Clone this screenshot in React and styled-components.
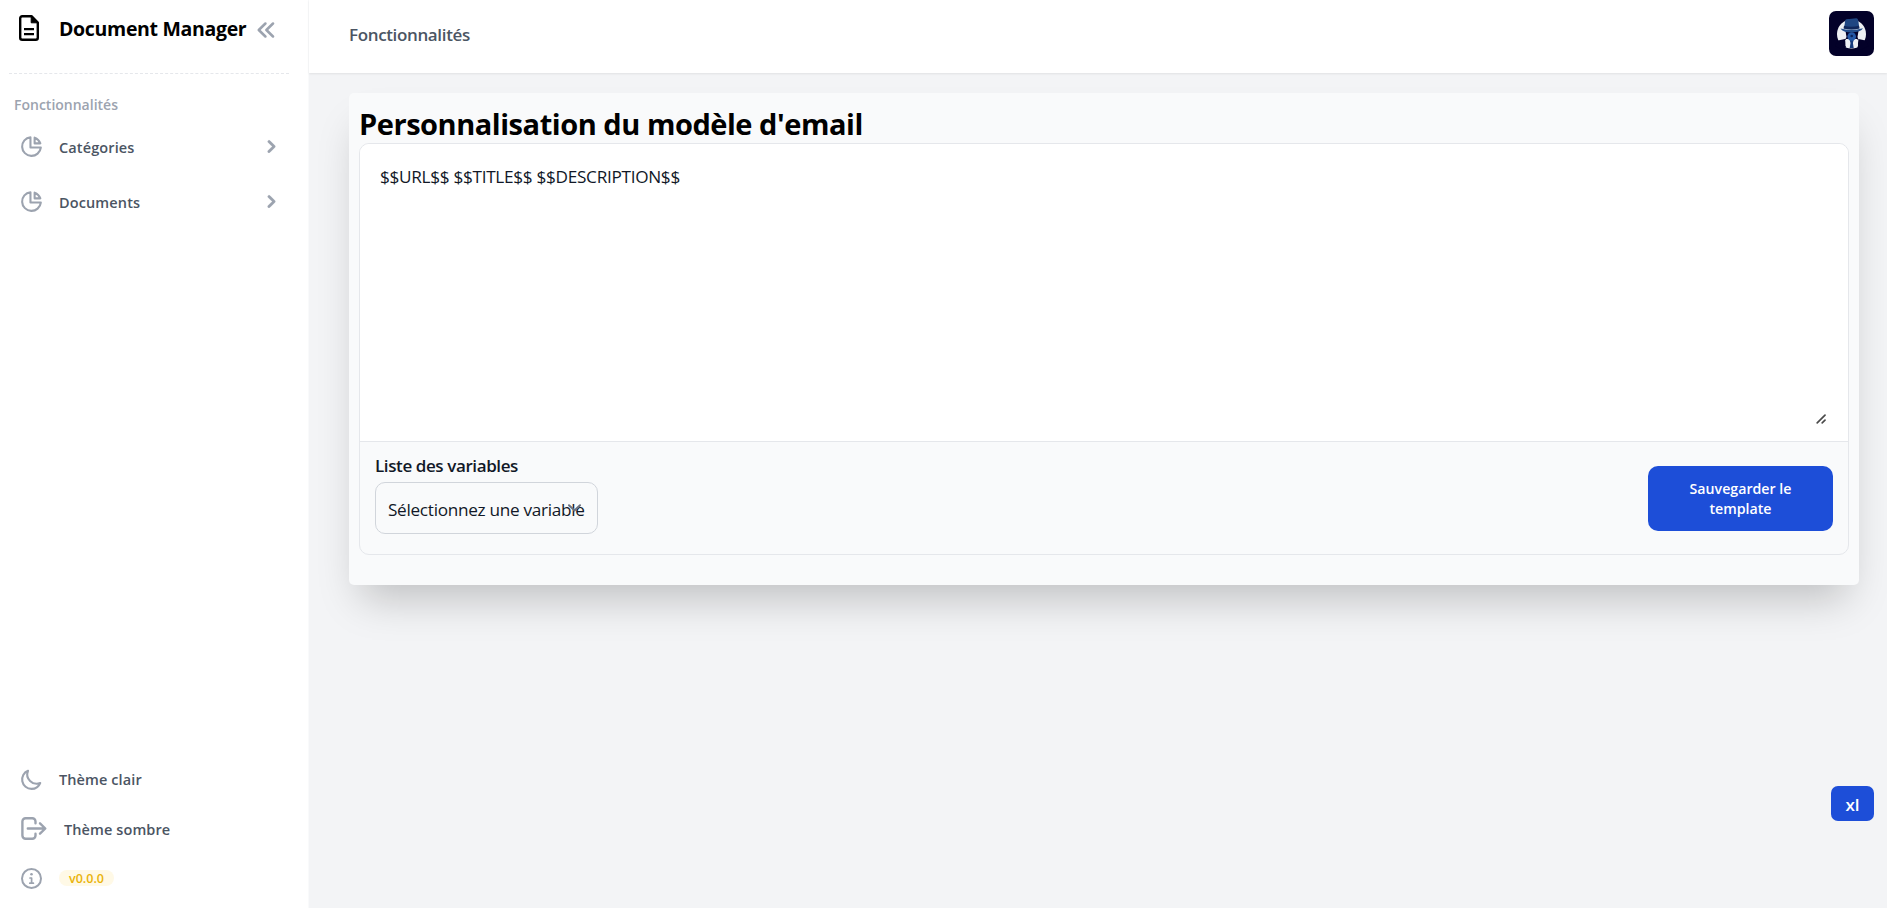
import React from "react";
import styled, { createGlobalStyle } from "styled-components";

const GlobalStyle = createGlobalStyle`
  *, *::before, *::after { box-sizing: border-box; }
  body { margin: 0; background: #f3f4f6; font-family: "Segoe UI", "Open Sans", "Noto Sans", sans-serif; color: #111827; overflow: hidden; }
  h1, p { margin: 0; }
`;

const Label = styled.span`
  display: block;
  white-space: nowrap;
  font-size: ${(p) => p.$size || 14.5}px;
  font-weight: ${(p) => p.$weight || 600};
  line-height: ${(p) => p.$line || 24}px;
  letter-spacing: ${(p) => p.$spacing || 0}px;
  color: ${(p) => p.$color || "#4b5563"};
`;

const Page = styled.div`
  display: grid;
  grid-template-columns: 309px 1fr;
  height: 908px;
`;

const Sidebar = styled.aside`
  display: flex;
  flex-direction: column;
  justify-content: space-between;
  background: #fff;
  border-right: 1px solid #f9fafb;
`;

const Brand = styled.div`
  display: flex;
  align-items: center;
  height: 74px;
  margin: 0 19px 0 9px;
  padding: 0 14px 16px 10px;
  border-bottom: 1px dashed #e5e7eb;
`;

const BrandName = styled(Label)`
  margin-left: 20px;
  flex: 1;
`;

const SectionTitle = styled(Label)`
  margin: 19px 0 0 14px;
`;

const NavItem = styled.a`
  display: flex;
  align-items: center;
  height: 55px;
  padding: 0 24px 0 19px;
`;

const NavList = styled.nav`
  display: flex;
  flex-direction: column;
  padding-top: 2px;
`;

const NavText = styled(Label)`
  flex: 1;
  margin-left: ${(p) => p.$gap || 15}px;
  padding-top: 2px;
`;

const BottomNav = styled.nav`
  display: flex;
  flex-direction: column;
  padding-bottom: 5px;
`;

const BottomItem = styled.a`
  display: flex;
  align-items: center;
  height: 49.5px;
  padding-left: 19px;
`;

const Version = styled.span`
  margin-left: 15px;
  width: 55px;
  height: 16px;
  border-radius: 8px;
  background: #fff9e6;
  color: #eab308;
  font-size: 12.5px;
  font-weight: 600;
  line-height: 17px;
  text-align: center;
`;

const Icon = styled.svg`
  display: block;
  flex: none;
  width: ${(p) => p.$w || 25}px;
  height: ${(p) => p.$h || p.$w || 25}px;
  fill: none;
  stroke: ${(p) => p.$color || "#9ca3af"};
  stroke-width: 2;
  stroke-linecap: round;
  stroke-linejoin: round;
`;

const FileIcon = styled(Icon)`
  margin-bottom: 2px;
`;

const CollapseIcon = styled(Icon)`
  margin-top: 3px;
`;

const Main = styled.main`
  display: flex;
  flex-direction: column;
  min-width: 0;
`;

const Header = styled.header`
  display: flex;
  justify-content: space-between;
  align-items: flex-start;
  height: 73px;
  padding: 11px 13px 0 40px;
  background: #fff;
  box-shadow: 0 1px 2px rgba(0, 0, 0, 0.08);
`;

const Crumb = styled(Label)`
  margin-top: 12px;
`;

const Avatar = styled.svg`
  width: 45px;
  height: 45px;
  border-radius: 7px;
  background: #030129;
`;

const Card = styled.section`
  margin: 20px 28px 0 40px;
  padding: 12px 10px 31px;
  height: 492px;
  border-radius: 5px;
  background: #f9fafb;
  box-shadow: 0 25px 40px -12px rgba(0, 0, 0, 0.22);
`;

const Title = styled.h1`
  height: 38px;
  font-size: 29px;
  line-height: 37px;
  font-weight: 700;
  letter-spacing: -0.46px;
  color: #000;
  white-space: nowrap;
`;

const Editor = styled.div`
  height: 412px;
  border: 1px solid #e5e7eb;
  border-radius: 10px;
  overflow: hidden;
`;

const EditorBody = styled.div`
  position: relative;
  height: 298px;
  padding: 19px 21px 16px 20px;
  background: #fff;
  border-bottom: 1px solid #e5e7eb;
`;

const TextArea = styled.textarea`
  display: block;
  width: 100%;
  height: 262px;
  padding: 0;
  border: 0;
  outline: 0;
  resize: none;
  background: #fff;
  color: #111827;
  font-family: inherit;
  font-size: 17.2px;
  line-height: 28px;
  letter-spacing: -0.3px;
`;

const ResizeGrip = styled(Icon)`
  position: absolute;
  right: 21px;
  bottom: 17px;
`;

const EditorFooter = styled.div`
  display: flex;
  justify-content: space-between;
  padding: 11px 15px;
`;

const Field = styled.div`
  display: flex;
  flex-direction: column;
  gap: 3px;
`;

const Select = styled.div`
  position: relative;
  width: 223px;
  height: 52px;
  padding: 13px 12px 11px;
  border: 1px solid #d1d5db;
  border-radius: 10px;
`;

const SelectArrow = styled(Icon)`
  position: absolute;
  right: 15px;
  top: 20px;
`;

const SaveButton = styled.button`
  width: 185px;
  height: 65px;
  margin-top: 13px;
  padding: 0 30px;
  border: 0;
  border-radius: 10px;
  background: #1d4ed8;
  color: #fff;
  font-family: inherit;
  font-size: 14.2px;
  font-weight: 600;
  line-height: 20px;
`;

const Badge = styled.div`
  position: fixed;
  right: 13px;
  bottom: 87px;
  width: 43px;
  height: 35px;
  border-radius: 7px;
  background: #1d4ed8;
  color: #fff;
  font-size: 17px;
  font-weight: 600;
  line-height: 37px;
  text-align: center;
`;

const PieIcon = () => (
  <Icon viewBox="0 0 24 24">
    <path d="M11 3.055A9.001 9.001 0 1020.945 13H11V3.055z" />
    <path d="M20.488 9H15V3.512A9.025 9.025 0 0120.488 9z" />
  </Icon>
);

const ChevronRight = () => (
  <Icon viewBox="0 0 20 20">
    <path
      d="M7.293 14.707a1 1 0 010-1.414L10.586 10 7.293 6.707a1 1 0 011.414-1.414l4 4a1 1 0 010 1.414l-4 4a1 1 0 01-1.414 0z"
      fill="#9ca3af"
      strokeWidth="0.3"
    />
  </Icon>
);

const sections = ["Catégories", "Documents"];

export default function App() {
  return (
    <>
      <GlobalStyle />
      <Page>
        <Sidebar>
          <div>
            <Brand>
              <FileIcon $w={20} $h={26} $color="#000" viewBox="0 0 20 26">
                <path d="M12.5 1.2H3.2a2 2 0 0 0-2 2v19.6a2 2 0 0 0 2 2h13.6a2 2 0 0 0 2-2V7.5z" strokeWidth="2.4" />
                <path d="M12.2 1.5v6.3h6.3z" fill="#000" strokeWidth="1" />
                <path d="M5 14.2h10M5 19.2h10" strokeWidth="2.2" strokeLinecap="butt" />
              </FileIcon>
              <BrandName $size={19.5} $weight={700} $color="#000" $spacing={-0.32}>Document Manager</BrandName>
              <CollapseIcon $w={18} $h={16} viewBox="0 0 18 16">
                <path d="M8.4 1.5L1.8 8l6.6 6.5M16 1.5L9.400 8l6.600 6.500" strokeWidth="2.500" />
              </CollapseIcon>
            </Brand>
            <SectionTitle $size={14} $color="#9ca3af">Fonctionnalités</SectionTitle>
            <NavList>
              {sections.map((name) => (
                <NavItem key={name}>
                  <PieIcon />
                  <NavText $spacing={0.12}>{name}</NavText>
                  <ChevronRight />
                </NavItem>
              ))}
            </NavList>
          </div>
          <BottomNav>
            <BottomItem>
              <Icon viewBox="0 0 24 24">
                <path d="M20.354 15.354A9 9 0 018.646 3.646 9.003 9.003 0 0012 21a9.003 9.003 0 008.354-5.646z" />
              </Icon>
              <NavText $spacing={0.1}>Thème clair</NavText>
            </BottomItem>
            <BottomItem>
              <Icon $w={29} $h={25} viewBox="0 0 29 25">
                <path d="M16.5 7.2V5.4a3.2 3.2 0 0 0-3.2-3.2H6.6a3.2 3.2 0 0 0-3.2 3.2v14.2a3.2 3.2 0 0 0 3.2 3.2H13.3a3.2 3.2 0 0 0 3.2-3.2v-1.8M8.8 12.5h17M21 7.3l5.3 5.2L21 17.7" strokeWidth="2.4" />
              </Icon>
              <NavText $gap={16} $spacing={0.1}>Thème sombre</NavText>
            </BottomItem>
            <BottomItem>
              <Icon viewBox="0 0 25 25">
                <circle cx="12.5" cy="12.5" r="9.5" />
                <path d="M11 12h1.6v5M10.8 17.2h3.6" strokeWidth="1.7" />
                <circle cx="12.5" cy="8.3" r="1.3" fill="#9ca3af" stroke="none" />
              </Icon>
              <Version>v0.0.0</Version>
            </BottomItem>
          </BottomNav>
        </Sidebar>
        <Main>
          <Header>
            <Crumb $size={17} $spacing={-0.36}>Fonctionnalités</Crumb>
            <Avatar viewBox="0 0 45 45">
              <circle cx="22.5" cy="23" r="14.5" fill="#eef0f3" />
              <path d="M9 29.500l7-1.500 1 8-3 3-8-4zM36.500 29.500l-7-1.500-1 8 3 3 8-4z" fill="#030129" />
              <path d="M16.500 20h13l-1 6 1 3H16l1.500-3z" fill="#030129" />
              <path d="M17 28h11.5l.5 7-2.5 2h-7.5l-2.500-2z" fill="#eef0f3" />
              <path d="M20.700 29h4l-.8 3 .8 5h-4l.8-5z" fill="#173b7c" />
              <circle cx="22.700" cy="25.500" r="4.300" fill="#2458a6" />
              <circle cx="22.700" cy="25" r="1.300" fill="#0c2257" />
              <path d="M15 17.500l1.300-8.500q1-1.500 4-1l7-.8q1.500 0 2 2l1 8q-7 2-15.300.3z" fill="#1f4682" />
              <path d="M15 14.800q7.500 1.700 15 0l.5 2.700q-8 2-16 0z" fill="#10275b" />
              <path d="M11.500 17.500q11 2.600 22.500-.3-2 4-11.300 4.200-9 0-11.200-3.900z" fill="#244f8c" />
            </Avatar>
          </Header>
          <Card>
            <Title>Personnalisation du modèle d'email</Title>
            <Editor>
              <EditorBody>
                <TextArea spellCheck={false} defaultValue="$$URL$$ $$TITLE$$ $$DESCRIPTION$$" />
                <ResizeGrip $w={11} $h={10} $color="#4b4b4b" viewBox="0 0 11 10">
                  <path d="M1.200 8.800L9 1.200M6.200 8.800L9 6.200" strokeWidth="1.700" />
                </ResizeGrip>
              </EditorBody>
              <EditorFooter>
                <Field>
                  <Label $size={17} $line={26} $color="#111827" $spacing={-0.4}>Liste des variables</Label>
                  <Select>
                    <Label $size={17.2} $weight={400} $line={28} $spacing={-0.3} $color="#111827">Sélectionnez une variable</Label>
                    <SelectArrow $w={15} $h={10} $color="#6b7280" viewBox="0 0 15 10">
                      <path d="M2 2.200l5.500 5.300L13 2.200" />
                    </SelectArrow>
                  </Select>
                </Field>
                <SaveButton>Sauvegarder le template</SaveButton>
              </EditorFooter>
            </Editor>
          </Card>
        </Main>
      </Page>
      <Badge>xl</Badge>
    </>
  );
}
